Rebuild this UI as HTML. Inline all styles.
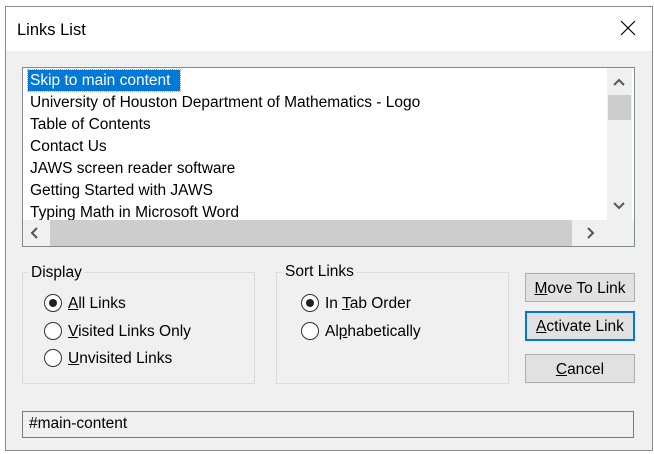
<!DOCTYPE html><html><head><style>
body{margin:0;width:654px;height:454px;background:#fff;font-family:"Liberation Sans",Arial,sans-serif;font-size:15.5px;color:#000;position:relative;overflow:hidden}
.a{position:absolute}
.win{left:5px;top:6px;width:646px;height:443px;border:1px solid #8a8a8a;background:#f0f0f0}
.title{left:0;top:0;width:646px;height:44px;background:#fff}
.item{position:absolute;left:7px;white-space:nowrap;line-height:22px}
.grp{border:1px solid #dcdcdc}
.leg{background:#f0f0f0;padding:0 2px;line-height:16px}
.r{width:18px;height:18px;border:1px solid #333;border-radius:50%;background:#fff;box-sizing:border-box}
.r.on::after{content:"";position:absolute;left:4px;top:4px;width:8px;height:8px;border-radius:50%;background:#222}
.btn{background:#e1e1e1;border:1px solid #adadad;box-sizing:border-box;text-align:center;line-height:29px}
u{text-decoration:underline}
</style></head><body>
<div class="a win">
<div class="a title"><div class="a" style="left:11px;top:14px;font-size:16.5px">Links List</div>
<svg class="a" style="left:614px;top:13px" width="16" height="16"><path d="M1 1L15 15M15 1L1 15" stroke="#000" stroke-width="1.2"/></svg></div>
</div>
<div class="a" style="left:22px;top:67px;width:611px;height:178px;border:1px solid #828790;background:#fff;overflow:hidden">
<div class="a" style="left:5px;top:2px;width:152px;height:21px;background:#0078d7;outline:1px dotted #e0a040"></div>
<div class="item" style="top:2px;color:#fff">Skip to main content</div>
<div class="item" style="top:24px">University of Houston Department of Mathematics - Logo</div>
<div class="item" style="top:46px">Table of Contents</div>
<div class="item" style="top:68px">Contact Us</div>
<div class="item" style="top:90px">JAWS screen reader software</div>
<div class="item" style="top:112px">Getting Started with JAWS</div>
<div class="item" style="top:134px">Typing Math in Microsoft Word</div>
<div class="a" style="left:584px;top:0;width:25px;height:152px;background:#f0f0f0"></div>
<div class="a" style="left:585px;top:27px;width:23px;height:25px;background:#cdcdcd"></div>
<div class="a" style="left:0;top:152px;width:611px;height:26px;background:#f0f0f0"></div>
<div class="a" style="left:27px;top:152px;width:522px;height:26px;background:#cdcdcd"></div>
<svg class="a" style="left:590px;top:10px" width="12" height="10"><path d="M1 7L6 2L11 7" stroke="#555" stroke-width="2" fill="none"/></svg>
<svg class="a" style="left:590px;top:133px" width="12" height="10"><path d="M1 2L6 7L11 2" stroke="#555" stroke-width="2" fill="none"/></svg>
<svg class="a" style="left:7px;top:159px" width="10" height="12"><path d="M7 1L2 6L7 11" stroke="#555" stroke-width="2" fill="none"/></svg>
<svg class="a" style="left:563px;top:159px" width="10" height="12"><path d="M2 1L7 6L2 11" stroke="#555" stroke-width="2" fill="none"/></svg>
</div>
<div class="a grp" style="left:22px;top:272px;width:231px;height:110px"></div>
<div class="a leg" style="left:29px;top:265px">Display</div>
<div class="a r on" style="left:44px;top:294px"></div><div class="a" style="left:68px;top:295px"><u>A</u>ll Links</div>
<div class="a r" style="left:44px;top:322px"></div><div class="a" style="left:68px;top:323px"><u>V</u>isited Links Only</div>
<div class="a r" style="left:44px;top:349px"></div><div class="a" style="left:68px;top:350px"><u>U</u>nvisited Links</div>
<div class="a grp" style="left:276px;top:272px;width:231px;height:110px"></div>
<div class="a leg" style="left:283px;top:264px">Sort Links</div>
<div class="a r on" style="left:301px;top:294px"></div><div class="a" style="left:325px;top:295px">In <u>T</u>ab Order</div>
<div class="a r" style="left:301px;top:322px"></div><div class="a" style="left:325px;top:323px">Al<u>p</u>habetically</div>
<div class="a btn" style="left:525px;top:273px;width:110px;height:29px"><u>M</u>ove To Link</div>
<div class="a btn" style="left:525px;top:311px;width:110px;height:30px;border:2px solid #0078d7;line-height:28px"><u>A</u>ctivate Link</div>
<div class="a btn" style="left:525px;top:354px;width:110px;height:29px"><u>C</u>ancel</div>
<div class="a" style="left:22px;top:411px;width:612px;height:27px;border:1px solid #7a7a7a;box-sizing:border-box;line-height:24px;padding-left:6px">#main-content</div>
</body></html>
